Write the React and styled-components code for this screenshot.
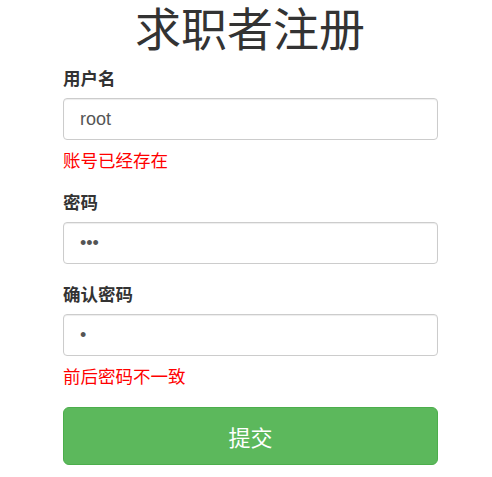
import React from "react";
import styled, { createGlobalStyle } from "styled-components";

const GlobalStyle = createGlobalStyle`
  * {
    box-sizing: border-box;
  }
  body {
    margin: 0;
    background: #fff;
    font-family: "Liberation Sans", "Noto Sans CJK SC", sans-serif;
    color: #333;
  }
`;

const Page = styled.main`
  width: 492px;
  padding-top: 7px;
`;

const Title = styled.h1`
  margin: 0;
  font-size: 46px;
  line-height: 46px;
  font-weight: 400;
  text-align: center;
  color: #333;
  padding-left: 8px;
`;

const Form = styled.form`
  width: 375px;
  margin: 14px 0 0 63px;
  display: flex;
  flex-direction: column;
`;

const Group = styled.div`
  display: flex;
  flex-direction: column;
  margin-bottom: ${(p) => (p.$hasError ? "18px" : "19px")};
`;

const Label = styled.label`
  font-size: 17.5px;
  line-height: 24px;
  font-weight: 700;
  color: #333;
  margin-bottom: 7px;
`;

const Input = styled.input`
  width: 100%;
  height: 42px;
  padding: 0 16px;
  font-family: "Liberation Sans", "Noto Sans CJK SC", sans-serif;
  font-size: 18px;
  color: #555;
  background: #fff;
  border: 1px solid #ccc;
  border-radius: 4px;
  box-shadow: inset 0 1px 1px rgba(0, 0, 0, 0.075);
  outline: none;
`;

const ErrorText = styled.span`
  margin-top: 9px;
  font-size: 17.5px;
  line-height: 24px;
  color: red;
`;

const SubmitButton = styled.button`
  width: 100%;
  height: 58px;
  margin-top: 0;
  border: 1px solid #4cae4c;
  border-radius: 6px;
  background: #5cb85c;
  color: #fff;
  font-family: "Liberation Sans", "Noto Sans CJK SC", sans-serif;
  font-size: 22px;
  cursor: pointer;
`;

function Field({ label, type = "text", value, error }) {
  return (
    <Group $hasError={!!error}>
      <Label>{label}</Label>
      <Input type={type} defaultValue={value} />
      {error && <ErrorText>{error}</ErrorText>}
    </Group>
  );
}

export default function App() {
  return (
    <Page>
      <GlobalStyle />
      <Title>求职者注册</Title>
      <Form onSubmit={(e) => e.preventDefault()}>
        <Field label="用户名" value="root" error="账号已经存在" />
        <Field label="密码" type="password" value="abc" />
        <Field label="确认密码" type="password" value="a" error="前后密码不一致" />
        <SubmitButton type="submit">提交</SubmitButton>
      </Form>
    </Page>
  );
}
